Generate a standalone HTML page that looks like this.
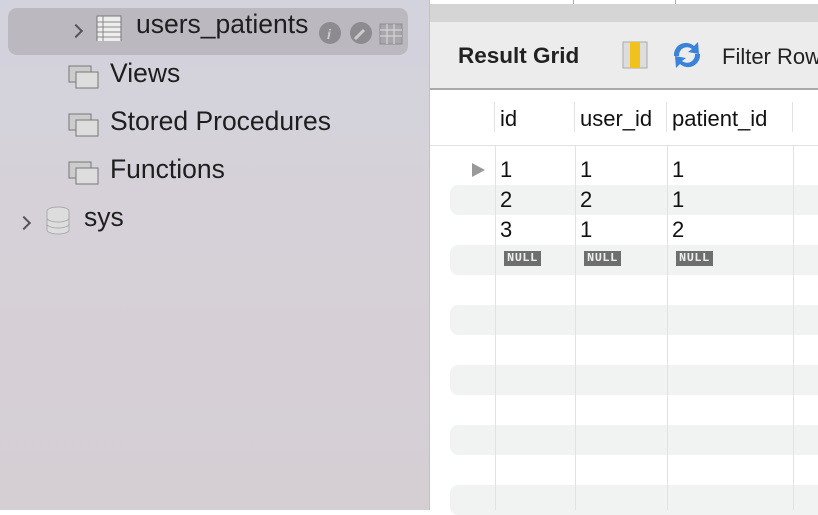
<!DOCTYPE html><html><head><style>
body{margin:0;width:818px;height:510px;overflow:hidden;position:relative;font-family:"Liberation Sans",sans-serif;}
.sb{position:absolute;left:0;top:0;width:429px;height:510px;background:linear-gradient(180deg,#d2d3dd 0%,#d6d1d8 40%,#d5cfd4 100%);border-right:1px solid #c4c0c4}
.hl{position:absolute;left:8px;top:8px;width:400px;height:47px;background:#bcb8c0;border-radius:9px}
.t{position:absolute;font-size:26.5px;color:#1e1e1e;white-space:nowrap}
.ic{position:absolute;width:32px;height:26px}
.rp{position:absolute;left:430px;top:0;width:388px;height:510px;background:#fff}
.tb{position:absolute;left:0;top:22px;width:388px;height:66px;background:#ececec;border-bottom:2px solid #a9a9a9}
.stripe{position:absolute;left:20px;width:368px;height:30px;background:#f1f2f2;border-radius:8px 0 0 8px}
.vl{position:absolute;width:1px;background:#e2e2e2}
.c{position:absolute;font-size:22px;color:#111;white-space:nowrap}
.null{position:absolute;background:#6e6e6e;color:#eee;font-size:12px;font-weight:bold;padding:1px 3px;letter-spacing:.5px;font-family:"Liberation Mono",monospace;line-height:13px}
.chev{position:absolute;width:8px;height:8px;border-right:2px solid #555;border-top:2px solid #555;transform:rotate(45deg)}
</style></head><body>
<div class="sb">
<div class="hl"></div>
<div class="chev" style="left:71px;top:26px"></div>
<svg class="ic" style="left:96px;top:15px" width="26" height="30"><rect x="1" y="1" width="24" height="27" fill="#eee" stroke="#777"/><g stroke="#888"><line x1="1" y1="7" x2="25" y2="7"/><line x1="1" y1="12" x2="25" y2="12"/><line x1="1" y1="17" x2="25" y2="17"/><line x1="1" y1="22" x2="25" y2="22"/><line x1="7" y1="1" x2="7" y2="28"/></g></svg>
<div class="t" style="left:136px;top:9px">users_patients</div>
<svg style="position:absolute;left:318px;top:21px" width="90" height="25"><circle cx="12" cy="12" r="11" fill="#8e8b90"/><text x="9" y="18" font-size="14" font-style="italic" font-weight="bold" fill="#ccc">i</text><circle cx="43" cy="12" r="11" fill="#8e8b90"/><path d="M37 18 L46 9" stroke="#ccc" stroke-width="3"/><rect x="62" y="3" width="22" height="20" fill="#a9a6ab" stroke="#8e8b90"/><g stroke="#ddd"><line x1="62" y1="9" x2="84" y2="9"/><line x1="62" y1="15" x2="84" y2="15"/><line x1="69" y1="3" x2="69" y2="23"/><line x1="76" y1="3" x2="76" y2="23"/></g></svg>
<svg class="ic" style="left:68px;top:64px"><rect x="1" y="2" width="22" height="16" fill="#ccc" stroke="#777"/><rect x="8" y="8" width="22" height="16" fill="#ddd" stroke="#777"/></svg>
<div class="t" style="left:110px;top:58px">Views</div>
<svg class="ic" style="left:68px;top:112px"><rect x="1" y="2" width="22" height="16" fill="#ccc" stroke="#777"/><rect x="8" y="8" width="22" height="16" fill="#ddd" stroke="#777"/></svg>
<div class="t" style="left:110px;top:106px">Stored Procedures</div>
<svg class="ic" style="left:68px;top:160px"><rect x="1" y="2" width="22" height="16" fill="#ccc" stroke="#777"/><rect x="8" y="8" width="22" height="16" fill="#ddd" stroke="#777"/></svg>
<div class="t" style="left:110px;top:154px">Functions</div>
<div class="chev" style="left:19px;top:218px"></div>
<svg style="position:absolute;left:45px;top:206px" width="26" height="30"><ellipse cx="13" cy="5" rx="11" ry="4" fill="#ddd" stroke="#aaa"/><path d="M2 5 V24 A11 4 0 0 0 24 24 V5" fill="#ddd" stroke="#aaa"/><path d="M2 12 A11 4 0 0 0 24 12 M2 18 A11 4 0 0 0 24 18" fill="none" stroke="#aaa"/></svg>
<div class="t" style="left:84px;top:202px">sys</div>
</div>
<div class="rp">
<div style="position:absolute;left:0;top:4px;width:388px;height:18px;background:#d5d5d5"></div>
<div style="position:absolute;left:143px;top:0;width:1px;height:4px;background:#aaa"></div>
<div style="position:absolute;left:245px;top:0;width:1px;height:4px;background:#aaa"></div>
<div class="tb">
<div style="position:absolute;left:28px;top:21px;font-size:22.5px;font-weight:bold;color:#222;white-space:nowrap">Result Grid</div>
<svg style="position:absolute;left:192px;top:19px" width="26" height="28"><rect x="1" y="1" width="24" height="26" fill="#ddd" stroke="#aaa"/><rect x="8" y="1" width="10" height="26" fill="#f1c21b"/></svg>
<svg style="position:absolute;left:240px;top:18px" width="34" height="30"><path d="M4 16 A12 12 0 0 1 24 6 L28 2 L29 14 L18 12 L22 9 A8 8 0 0 0 9 16Z" fill="#3a83d8"/><path d="M30 14 A12 12 0 0 1 10 24 L6 28 L5 16 L16 18 L12 21 A8 8 0 0 0 25 14Z" fill="#3a83d8"/></svg>
<div style="position:absolute;left:292px;top:22px;font-size:22px;color:#222;white-space:nowrap">Filter Rows</div>
</div>
<div style="position:absolute;left:0;top:145px;width:388px;height:1px;background:#e2e2e2"></div>
<div class="stripe" style="top:185px"></div><div class="stripe" style="top:245px"></div>
<div class="stripe" style="top:305px"></div><div class="stripe" style="top:365px"></div>
<div class="stripe" style="top:425px"></div><div class="stripe" style="top:485px"></div>
<div class="vl" style="left:64px;top:102px;height:30px"></div><div class="vl" style="left:144px;top:102px;height:30px"></div><div class="vl" style="left:236px;top:102px;height:30px"></div><div class="vl" style="left:362px;top:102px;height:30px"></div>
<div class="vl" style="left:65px;top:146px;height:364px"></div><div class="vl" style="left:145px;top:146px;height:364px"></div><div class="vl" style="left:237px;top:146px;height:364px"></div><div class="vl" style="left:363px;top:146px;height:364px"></div>
<div class="c" style="left:70px;top:106px">id</div><div class="c" style="left:150px;top:106px">user_id</div><div class="c" style="left:242px;top:106px">patient_id</div>
<div style="position:absolute;left:42px;top:163px;width:0;height:0;border-left:13px solid #999;border-top:7px solid transparent;border-bottom:7px solid transparent"></div>
<div class="c" style="left:70px;top:157px">1</div><div class="c" style="left:150px;top:157px">1</div><div class="c" style="left:242px;top:157px">1</div>
<div class="c" style="left:70px;top:187px">2</div><div class="c" style="left:150px;top:187px">2</div><div class="c" style="left:242px;top:187px">1</div>
<div class="c" style="left:70px;top:217px">3</div><div class="c" style="left:150px;top:217px">1</div><div class="c" style="left:242px;top:217px">2</div>
<div class="null" style="left:74px;top:251px">NULL</div><div class="null" style="left:154px;top:251px">NULL</div><div class="null" style="left:246px;top:251px">NULL</div>
</div>
</body></html>
